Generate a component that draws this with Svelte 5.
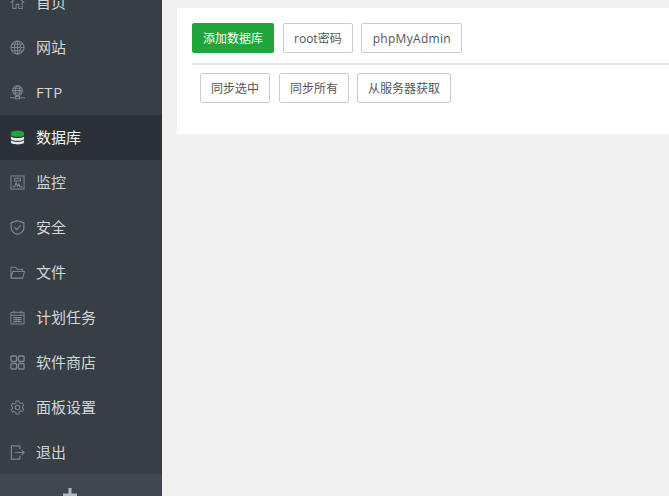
<script>
  const menu = [
    { name: "首页", icon: "home" },
    { name: "网站", icon: "globe" },
    { name: "FTP", icon: "ftp", latin: true },
    { name: "数据库", icon: "db", active: true },
    { name: "监控", icon: "monitor" },
    { name: "安全", icon: "shield" },
    { name: "文件", icon: "folder" },
    { name: "计划任务", icon: "calendar" },
    { name: "软件商店", icon: "grid" },
    { name: "面板设置", icon: "gear" },
    { name: "退出", icon: "exit" }
  ];
</script>

<div class="page">
  <aside class="sidebar">
    <ul class="menu">
      {#each menu as item}
        <li class="item" class:active={item.active} class:latin={item.latin}>
          <svg class="icon" viewBox="0 0 16 16" fill="none" stroke="#7f858b" stroke-width="1.100">
            {#if item.icon === "home"}
              <path d="M.8 8.200 8 1.500l7.200 6.700M3 7v7.500h3.500V10h3v4.500H13V7" />
            {:else if item.icon === "globe"}
              <circle cx="8" cy="8" r="7" />
              <ellipse cx="8" cy="8" rx="3.200" ry="7" />
              <path d="M8 1v14M1 8h14M2 4.600h12M2 11.400h12" />
            {:else if item.icon === "ftp"}
              <circle cx="8" cy="6" r="5.200" />
              <ellipse cx="8" cy="6" rx="2.400" ry="5.200" />
              <path d="M2.800 6h10.400M3.600 3.400h8.800M3.600 8.600h8.800M0 13.500h5.800M10.200 13.500H16M8 11.200v1" />
              <rect x="5.800" y="12.300" width="4.400" height="2.400" />
            {:else if item.icon === "db"}
              <path d="M1 3C1 1.600 4.100.7 8 .7s7 .9 7 2.300v2C15 6.400 11.900 7.300 8 7.300S1 6.400 1 5Z" fill="#20a53a" stroke="none" />
              <path d="M1 6.900C2.300 8 5 8.500 8 8.500s5.700-.5 7-1.600v2.300c0 1.300-3.100 2.200-7 2.200s-7-.9-7-2.200Z" fill="#e8eaeb" stroke="none" />
              <path d="M1 11C2.300 12.100 5 12.700 8 12.700s5.700-.6 7-1.700v2.100c0 1.400-3.100 2.300-7 2.300s-7-.9-7-2.300Z" fill="#e8eaeb" stroke="none" />
            {:else if item.icon === "monitor"}
              <rect x="1" y="1" width="14" height="14" />
              <path d="M2.500 12.500H5L6.500 8 8 12 9.500 9.500l1 3h3M5 3.500h6V6.500H5Z" />
            {:else if item.icon === "shield"}
              <path d="M8 .8 14.800 3v5.500c0 3.200-3 5.500-6.800 6.800C4.200 14 1.200 11.700 1.200 8.500V3Z" stroke-width="1.300" />
              <path d="M4.800 7.800 7.300 10.300 11.300 5.800" stroke-width="1.300" />
            {:else if item.icon === "folder"}
              <path d="M1 14V2.500h5L7.500 4.500h6V7M1 14 3 7h12.500L13.500 14Z" />
            {:else if item.icon === "calendar"}
              <rect x="1" y="2.500" width="14" height="12.500" rx="1" />
              <path d="M1 5.500h14M4.500 .8v3M11.500 .8v3M3.500 8h9M3.500 10.200h9M3.500 12.400h9M6.500 7.500v5.500M9.500 7.500v5.500" />
            {:else if item.icon === "grid"}
              <g stroke-width="1.500">
                <rect x="1" y="1" width="6" height="6" rx="1.200" />
                <rect x="9" y="1" width="6" height="6" rx="1.200" />
                <rect x="1" y="9" width="6" height="6" rx="1.200" />
                <rect x="9" y="9" width="6" height="6" rx="1.200" />
              </g>
            {:else if item.icon === "gear"}
              <circle cx="8" cy="8" r="2.400" />
              <path d="M6.500 1h3l.4 1.800 1.500.8 1.800-.6 1.400 2.500-1.300 1.300v1.600l1.300 1.300-1.400 2.500-1.800-.6-1.500.8L9.500 15h-3l-.4-1.800-1.500-.8-1.800.6-1.400-2.500 1.300-1.300V7.400L1.400 6.100 2.800 3.600l1.800.6 1.500-.8Z" />
            {:else if item.icon === "exit"}
              <path d="M10.500 4.500V1h-9v14h9v-3.500M5.500 8h9.500M12.500 5.500 15 8l-2.500 2.500" stroke-width="1.300" />
            {/if}
          </svg>
          <span>{item.name}</span>
        </li>
      {/each}
    </ul>
    <div class="add">
      <svg viewBox="0 0 14 14" class="plus"><path d="M7 0v14M0 7h14" stroke="#b5b8bb" stroke-width="3" /></svg>
    </div>
  </aside>

  <main class="content">
    <section class="card">
      <div class="row">
        <button class="btn primary">添加数据库</button>
        <button class="btn">root密码</button>
        <button class="btn wide">phpMyAdmin</button>
      </div>
      <div class="sync">
        <button class="btn">同步选中</button>
        <button class="btn">同步所有</button>
        <button class="btn">从服务器获取</button>
      </div>
    </section>
  </main>
</div>

<style>
  :global(body) {
    margin: 0;
    overflow: hidden;
  }

  .page {
    display: flex;
    width: 669px;
    height: 496px;
    overflow: hidden;
    background: #f1f1f1;
    font-family: "Open Sans", "Noto Sans CJK SC", sans-serif;
  }

  .sidebar {
    flex: 0 0 162px;
    background: #363e46;
    overflow: hidden;
  }

  .menu {
    list-style: none;
    margin: -20px 0 0;
    padding: 0;
  }

  .item {
    display: flex;
    align-items: center;
    height: 45px;
    padding-left: 10px;
    color: #d3d6d9;
    font-size: 15px;
  }

  .item span {
    margin-top: -2px;
  }

  .item.latin span {
    letter-spacing: 0.6px;
  }

  .item.active {
    background: #2c3138;
    color: #f2f3f4;
  }

  .icon {
    width: 15px;
    height: 15px;
    margin-right: 11px;
    flex: none;
  }

  .add {
    height: 22px;
    margin-top: -1px;
    background: #3e464f;
    padding: 14px 0 0 63px;
  }

  .plus {
    display: block;
    width: 14px;
    height: 14px;
  }

  .content {
    flex: 1;
    min-width: 0;
    padding: 8px 0 0 15px;
  }

  .card {
    background: #fff;
    height: 96px;
    padding: 15px 0 15px 15px;
    width: 600px;
  }

  .row {
    display: flex;
    gap: 8px;
    height: 40px;
    border-bottom: 2px solid #e6e6e6;
  }

  .sync {
    display: flex;
    gap: 8px;
    padding: 8px 0 0 8px;
  }

  /* first button sits a pixel further off, like inline whitespace */
  .btn:first-child {
    margin-right: 1px;
  }

  .btn {
    height: 30px;
    padding: 2px 10px 0;
    border: 1px solid #ccc;
    border-radius: 2px;
    background: #fff;
    color: #555;
    font-family: inherit;
    font-size: 12px;
    line-height: 26px;
    white-space: nowrap;
  }

  .btn.wide {
    padding: 2px 10px 0 11px;
    letter-spacing: 0.3px;
  }

  .btn.primary {
    background: #20a53a;
    border-color: #20a53a;
    color: #fff;
  }
</style>
